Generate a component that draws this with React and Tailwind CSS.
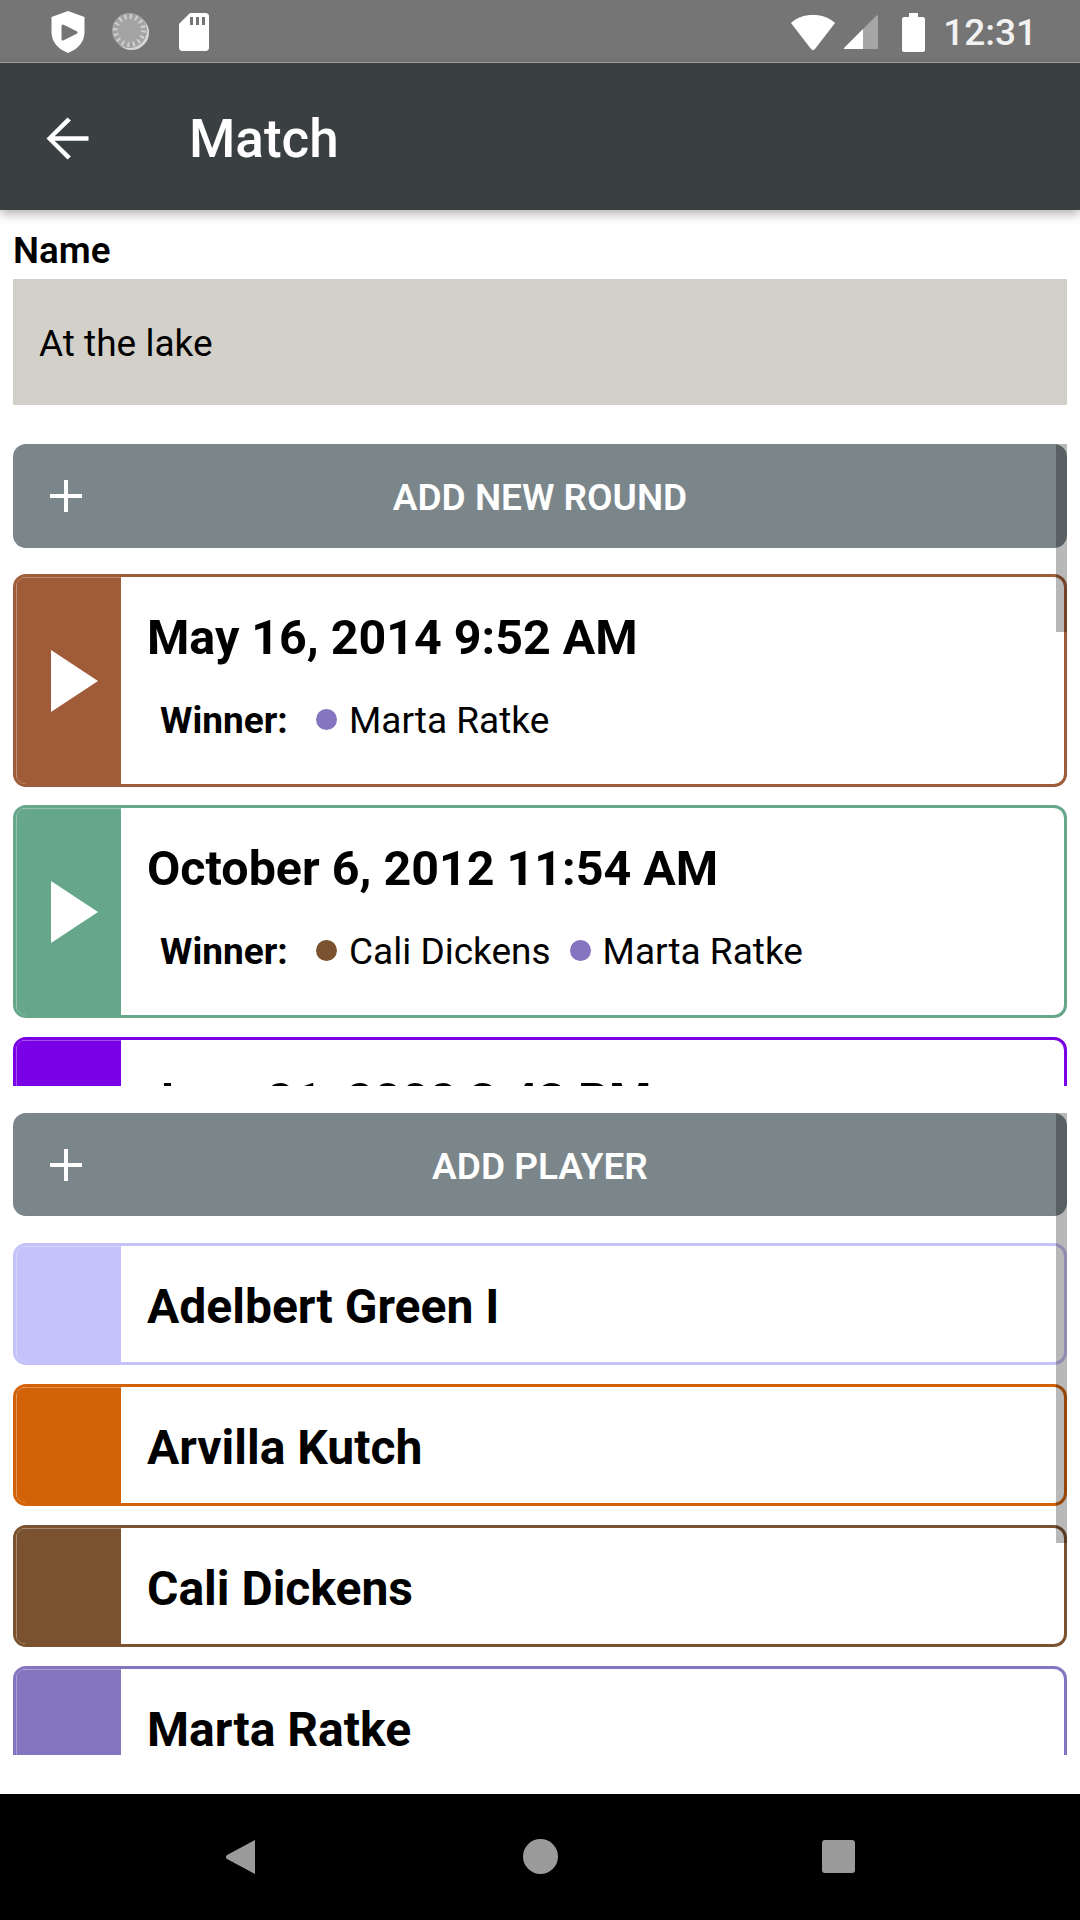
const F = { fontFamily: '"Roboto", "Liberation Sans", sans-serif' };

function Plus() {
  return (
    <svg width="34" height="34" viewBox="0 0 34 34" className="block">
      <path d="M17 1V33M1 17H33" stroke="#fff" strokeWidth="4" fill="none" />
    </svg>
  );
}

function Play() {
  return (
    <svg width="50" height="64" viewBox="0 0 50 64" className="block">
      <path d="M1 1L48 32L1 63Z" fill="#fff" />
    </svg>
  );
}

function Scrollbar({ h }) {
  return <div className="absolute top-0 right-0 w-[11px] bg-black/[0.28]" style={{ height: h }} />;
}

function AddButton({ label, tall }) {
  return (
    <div className={tall ? "relative flex items-center justify-center h-[104px] pt-[4px] rounded-[13px] bg-[#7b868b] shrink-0" : "relative flex items-center justify-center h-[103px] pt-[4px] rounded-[13px] bg-[#7b868b] shrink-0"}>
      <div className="absolute left-[36px] top-[35px]"><Plus /></div>
      <span className="text-[37px] font-semibold text-white">{label}</span>
    </div>
  );
}

function Dot({ color }) {
  return <span className="block w-[21px] h-[21px] rounded-full shrink-0 -mt-[3px]" style={{ background: color }} />;
}

function RoundCard({ color, date, winners, extra }) {
  return (
    <div className={extra ? "flex h-[213px] mt-[1px] shrink-0 border-[3px] rounded-[13px] overflow-hidden bg-white" : "flex h-[213px] shrink-0 border-[3px] rounded-[13px] overflow-hidden bg-white"} style={{ borderColor: color }}>
      <div className="w-[105px] shrink-0 flex items-center pl-[33px] border-l border-t border-white/30" style={{ backgroundColor: color }}>
        <Play />
      </div>
      <div className="flex-1 pl-[26px] pt-[33px]">
        <div className="text-[48.4px] leading-[56px] font-bold text-black">{date}</div>
        <div className="flex items-center h-[43px] mt-[33px] pl-[13px] text-[37px] text-black">
          <span className="font-bold w-[156px]">Winner:</span>
          <div className="flex items-center">
            {winners.map((w, i) => (
              <div key={w.name} className={i > 0 ? "flex items-center ml-[19px] gap-[12px]" : "flex items-center gap-[12px]"}>
                <Dot color={w.color} />
                <span>{w.name}</span>
              </div>
            ))}
          </div>
        </div>
      </div>
    </div>
  );
}

function PlayerCard({ color, name }) {
  return (
    <div className="flex h-[122px] shrink-0 border-[3px] rounded-[13px] overflow-hidden bg-white" style={{ borderColor: color }}>
      <div className="w-[105px] shrink-0 border-l border-t border-white/30" style={{ backgroundColor: color }} />
      <div className="flex-1 flex items-center pl-[26px] pt-[5px] text-[48px] font-bold text-black">{name}</div>
    </div>
  );
}

export default function App() {
  return (
    <div className="flex flex-col w-[1080px] h-[1920px] bg-white overflow-hidden" style={F}>
      <div className="flex items-center justify-between h-[63px] shrink-0 bg-[#757575] border-b border-[#a8a8a8] relative pt-[2px]">
        <div className="flex items-center pl-[51px]">
          <svg width="34" height="42" viewBox="0 0 34 42" className="block">
            <path d="M17 0L33.500 6V21C33.500 31 27 38 17 42C7 38 .5 31 .5 21V6Z" fill="#fff" />
            <path d="M12 15L25 21.500L12 28Z" fill="#757575" stroke="#757575" strokeWidth="3" strokeLinejoin="round" />
          </svg>
          <svg width="38" height="38" viewBox="0 0 38 38" className="block ml-[27px]">
            <circle cx="19.500" cy="19.500" r="17.500" fill="#d8d8d8" />
            <circle cx="17.500" cy="17.500" r="17.500" fill="#a3a3a3" />
            <circle cx="17.500" cy="17.500" r="14" fill="none" stroke="#cfcfcf" strokeWidth="5" strokeDasharray="2 3.500" />
          </svg>
          <svg width="30" height="38" viewBox="0 0 30 38" className="block ml-[29px]">
            <path d="M11 0H27C28.600 0 30 1.400 30 3V35C30 36.600 28.600 38 27 38H3C1.400 38 0 36.600 0 35V11Z" fill="#fff" />
            <path d="M11 4H14V12H11ZM17 4H20V12H17ZM23 4H26V12H23Z" fill="#757575" />
          </svg>
        </div>
        <div className="flex items-center pr-[43px]">
          <svg width="46" height="37" viewBox="0 0 46 37" className="block">
            <path d="M1 9C7 3.500 14 1 23 1C32 1 39 3.500 45 9L25 35C24 36.500 22 36.500 21 35Z" fill="#fff" />
          </svg>
          <svg width="36" height="36" viewBox="0 0 36 36" className="block ml-[7px]">
            <path d="M20 15V35H35V2C35 1 34 1 33 2Z" fill="#a6a6a6" />
            <path d="M20 15L1 34C0.500 35 1 35 2 35H20Z" fill="#fff" />
          </svg>
          <svg width="23" height="39" viewBox="0 0 23 39" className="block ml-[23px]">
            <path d="M7 0H16V4H21C22 4 23 5 23 6V37C23 38 22 39 21 39H2C1 39 0 38 0 37V6C0 5 1 4 2 4H7Z" fill="#fff" />
          </svg>
          <span className="text-[37px] font-medium text-[#f2f2f2] ml-[18px] leading-none">12:31</span>
        </div>
      </div>

      <div className="relative z-10 flex items-center h-[147px] shrink-0 pt-[3px] bg-[#3a3f42] shadow-[0_4px_10px_rgba(0,0,0,0.3)]">
        <svg width="63" height="63" viewBox="0 0 24 24" className="block ml-[36px]">
          <path d="M20 11.100H7.100L13.300 5.100L12 4L4 12L12 20L13.300 18.900L7.100 12.900H20Z" fill="#fff" />
        </svg>
        <span className="ml-[90px] pt-[3px] text-[53px] font-medium text-white">Match</span>
      </div>

      <div className="flex-1 flex flex-col px-[13px] min-h-0">
        <div className="h-[69px] pt-[19px] shrink-0 text-[36.75px] leading-[43px] font-semibold text-black">Name</div>
        <div className="flex items-center h-[126px] pl-[26px] pt-[3px] shrink-0 bg-[#d3d0c9] text-[37px] text-black">At the lake</div>

        <div className="relative h-[642px] mt-[39px] shrink-0 overflow-hidden">
          <div className="flex flex-col">
            <AddButton label="ADD NEW ROUND" tall />
            <div className="flex flex-col gap-[18px] mt-[26px]">
              <RoundCard color="#a05c38" date="May 16, 2014 9:52 AM" winners={[{ name: "Marta Ratke", color: "#8574bf" }]} />
              <RoundCard color="#66a78a" date="October 6, 2012 11:54 AM" winners={[{ name: "Cali Dickens", color: "#7b5230" }, { name: "Marta Ratke", color: "#8574bf" }]} />
              <RoundCard extra color="#7a00e6" date="June 21, 2002 3:43 PM" winners={[{ name: "Marta Ratke", color: "#8574bf" }]} />
            </div>
          </div>
          <Scrollbar h={188} />
        </div>

        <div className="relative h-[642px] mt-[27px] shrink-0 overflow-hidden">
          <div className="flex flex-col">
            <AddButton label="ADD PLAYER" />
            <div className="flex flex-col gap-[19px] mt-[27px]">
              <PlayerCard color="#c5c1fb" name="Adelbert Green I" />
              <PlayerCard color="#d26208" name="Arvilla Kutch" />
              <PlayerCard color="#7b5230" name="Cali Dickens" />
              <PlayerCard color="#8574bf" name="Marta Ratke" />
            </div>
          </div>
          <Scrollbar h={430} />
        </div>
      </div>

      <div className="relative h-[126px] shrink-0 bg-black">
        <svg width="32" height="36" viewBox="0 0 32 36" className="absolute left-[225px] top-[45px]">
          <path d="M30 1V35L2 20C0.500 19 0.500 17 2 16Z" fill="#9a9a9a" />
        </svg>
        <div className="absolute left-[523px] top-[45px] w-[35px] h-[35px] rounded-full bg-[#9a9a9a]" />
        <div className="absolute left-[822px] top-[46px] w-[33px] h-[33px] rounded-[3px] bg-[#9a9a9a]" />
      </div>
    </div>
  );
}
